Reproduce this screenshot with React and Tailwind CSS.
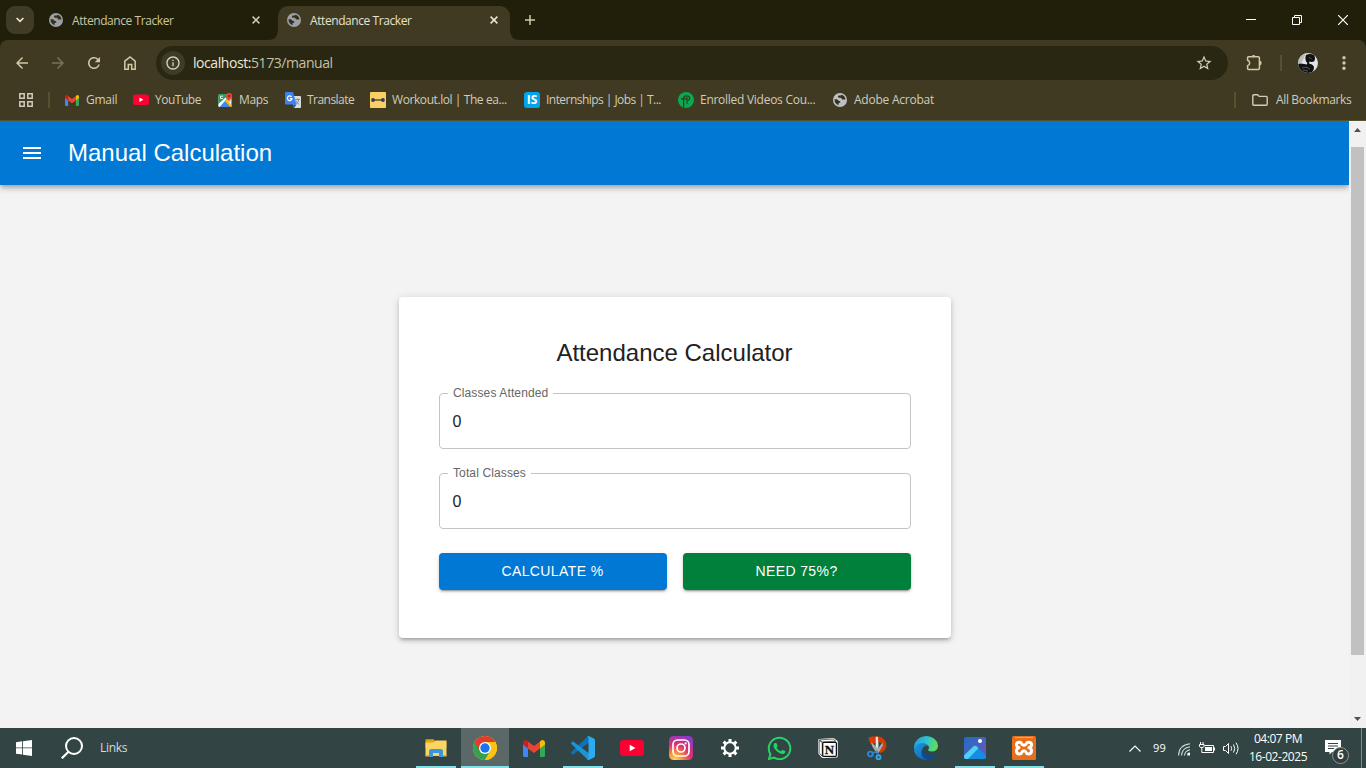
import React from "react";
import {
  MdArrowBack,
  MdArrowForward,
  MdRefresh,
  MdInfoOutline,
  MdStarOutline,
  MdMenu,
} from "react-icons/md";
import { FaWhatsapp } from "react-icons/fa";

function Globe({ color = "#9aa0a6", size = 14 }) {
  return (
    <svg width={size} height={size} viewBox="0 0 14 14" className="shrink-0">
      <circle cx="7" cy="7" r="7" fill={color} />
      <path
        d="M1.500 6.300H3.600Q4.600 6.300 5 7.200Q5.300 7.900 6.300 7.900Q7.400 8 7.400 8.900Q7.300 9.700 6.400 9.800Q5.500 10 5.500 10.900V12.200C3 11.500 1.500 9.400 1.500 6.300Z"
        fill="#35311c"
      />
      <path
        d="M8.700 1.700L7.700 2.500H6Q5 2.600 4.900 3.700Q5 4.700 6.100 4.700H7.700Q8.400 4.800 8.500 5.600Q8.700 6.500 9.700 6.500H12.500C12.400 4.200 10.900 2.200 8.700 1.700Z"
        fill="#35311c"
      />
    </svg>
  );
}

function Cross({ color }) {
  return (
    <svg width="8" height="8" viewBox="0 0 8 8" className="shrink-0">
      <path d="M.6.6l6.8 6.8M7.400.6L.6 7.400" stroke={color} strokeWidth="1.500" />
    </svg>
  );
}

function GmailIcon({ w, h }) {
  return (
    <svg width={w} height={h} viewBox="0 0 22 17">
      <path d="M0 3.500V15.500Q0 17 1.500 17H5V7Z" fill="#4285f4" />
      <path d="M22 3.500V15.500Q22 17 20.500 17H17V7Z" fill="#34a853" />
      <path d="M0 2.500Q0 0 2.300 0Q3.200 0 4 .6L5 1.400V8.400L0 4.600Z" fill="#c5221f" />
      <path d="M22 2.500Q22 0 19.700 0Q18.800 0 18 .6L17 1.400V8.400L22 4.600Z" fill="#fbbc04" />
      <path d="M5 1.400L11 6L17 1.400V8.400L11 13L5 8.400Z" fill="#ea4335" />
    </svg>
  );
}

function YouTubeIcon({ w, h }) {
  return (
    <svg width={w} height={h} viewBox="0 0 24 16">
      <rect width="24" height="16" rx="3.500" fill="#ff0033" />
      <path d="M9.700 4.700V11.300L15.500 8Z" fill="#fff" />
    </svg>
  );
}

function MapsIcon() {
  return (
    <svg width="16" height="16" viewBox="0 0 16 16">
      <rect x="1.500" y="2" width="13" height="13" rx="1.500" fill="#e8eaed" />
      <path d="M1.500 3.500Q1.500 2 3 2H9.500L11 7.500L2 14.500L1.500 14Z" fill="#1ea362" />
      <path d="M2 15L8 8.500L14 15Z" fill="#4285f4" />
      <path d="M1.500 12L8.500 5.500L9.800 7L2.500 15L1.500 14.200Z" fill="#fff" />
      <path d="M8 9L13.500 15H14.500V13.500L9.500 7.500Z" fill="#fbbc04" />
      <path d="M3.500 4.200h2.500M3.500 4.200v2.300h2.300" stroke="#fff" fill="none" strokeWidth=".9" />
      <path d="M12 10.500C12 8 9 6.800 9 4A3.100 3.100 0 0 1 15.200 4C15.200 6.800 12 8 12 10.500Z" fill="#ea4335" />
      <circle cx="12.100" cy="4" r="1.100" fill="#8a1c14" />
    </svg>
  );
}

function TranslateIcon() {
  return (
    <svg width="16" height="16" viewBox="0 0 16 16">
      <path d="M6 4H15Q16 4 16 5V15Q16 16 15 16H9Z" fill="#dadce0" />
      <path d="M1.200 0H8L11.500 12.500H1.200Q0 12.500 0 11.300V1.200Q0 0 1.200 0Z" fill="#3b83f2" />
      <path d="M7.800 12.500H11.500L9.200 16Z" fill="#1a56c4" />
      <path d="M6.500 4.800A2.300 2.300 0 1 0 7 6.600H4.900" stroke="#fff" fill="none" strokeWidth="1.200" />
      <path d="M10.300 7.500H14.800M12.500 6.500V7.500M14 7.500Q13.500 10 11.300 12M11 8.800Q12 11 14.300 12.500" stroke="#7c8187" fill="none" strokeWidth=".9" />
    </svg>
  );
}

function WorkoutIcon() {
  return (
    <svg width="16" height="16" viewBox="0 0 16 16">
      <rect width="16" height="16" rx=".8" fill="#f9cf66" />
      <circle cx="3" cy="8" r="1.900" fill="#2f3b46" />
      <circle cx="13" cy="8" r="1.900" fill="#2f3b46" />
      <path d="M3 8H13" stroke="#2f3b46" strokeWidth="1.300" />
      <path d="M1 8H2.200M13.800 8H15" stroke="#6d7f86" strokeWidth="1" />
    </svg>
  );
}

function ISIcon() {
  return (
    <span className="flex h-4 w-4 items-center justify-center rounded-[3px] bg-[#00a5ec] pb-px font-['Open_Sans',sans-serif] text-[12px] leading-none font-bold text-white">
      IS
    </span>
  );
}

function EnrolledIcon() {
  return (
    <svg width="16" height="16" viewBox="0 0 16 16">
      <circle cx="8" cy="8" r="8" fill="#0aa84f" />
      <path
        d="M5.600 15.500V7.500Q5.600 3.600 8.600 3.900Q11.800 4 11.600 6.600Q11.200 8.600 9 8M3 6.800H9"
        stroke="#2f3a1c"
        fill="none"
        strokeWidth="1.200"
      />
      <path d="M9 5V12" stroke="#2f3a1c" strokeWidth="1" />
    </svg>
  );
}

const bookmarks = [
  { label: "Gmail", width: "w-[69px]", track: "tracking-[-0.25px]", icon: <GmailIcon w={14} h={11} /> },
  { label: "YouTube", width: "w-[84px]", track: "tracking-[-0.48px]", icon: <YouTubeIcon w={16} h={11.500} /> },
  { label: "Maps", width: "w-[68px]", track: "tracking-[-0.35px]", icon: <MapsIcon /> },
  { label: "Translate", width: "w-[85px]", track: "tracking-[-0.53px]", icon: <TranslateIcon /> },
  { label: "Workout.lol | The ea...", width: "w-[154px]", track: "tracking-[-0.42px]", icon: <WorkoutIcon /> },
  { label: "Internships | Jobs | T...", width: "w-[154px]", track: "tracking-[-0.54px]", icon: <ISIcon /> },
  { label: "Enrolled Videos Cou...", width: "w-[154px]", track: "tracking-[-0.27px]", icon: <EnrolledIcon /> },
  { label: "Adobe Acrobat", width: "w-[120px]", track: "tracking-[-0.23px]", icon: <Globe color="#bdc1c6" /> },
];

function TabStrip() {
  return (
    <div className="flex h-10 shrink-0 bg-[#211f0a] text-[12px]">
      <div className="ml-1.5 mt-1.5 flex h-7 w-7 items-center justify-center rounded-[9px] bg-[#403b24]">
        <svg width="8" height="6" viewBox="0 0 8 6">
          <path d="M.6 1L4 4.400L7.400 1" stroke="#e8e4cf" strokeWidth="1.700" fill="none" />
        </svg>
      </div>
      <div className="ml-[15px] flex h-10 w-[211px] items-center">
        <Globe />
        <span className="ml-[9px] flex-1 pt-0.5 tracking-[-0.42px] whitespace-nowrap text-[#c9c5a3]">Attendance Tracker</span>
        <Cross color="#d3cfb0" />
      </div>
      <div className="mt-1.5 flex">
        <svg width="10" height="34" viewBox="0 0 10 34" className="ml-[8px]">
          <path d="M0 34Q10 34 10 24V34Z" fill="#403a23" />
        </svg>
        <div className="flex h-[34px] w-[232px] items-center rounded-t-[10px] bg-[#403a23] pr-[12px] pb-1.5 pl-[9px]">
          <Globe />
          <span className="ml-[9px] flex-1 pt-0.5 tracking-[-0.42px] whitespace-nowrap text-[#e6e2cf]">Attendance Tracker</span>
          <Cross color="#eae6d6" />
        </div>
        <svg width="10" height="34" viewBox="0 0 10 34">
          <path d="M10 34Q0 34 0 24V34Z" fill="#403a23" />
        </svg>
      </div>
      <svg width="10" height="10" viewBox="0 0 10 10" className="mt-[15px] ml-[5px]">
        <path d="M5 0V10M0 5H10" stroke="#cfcaa5" strokeWidth="1.500" />
      </svg>
      <div className="ml-auto flex h-10 items-center pr-[18px]">
        <svg width="10" height="10" viewBox="0 0 10 10" className="mr-9">
          <path d="M0 4.500H10" stroke="#fff" />
        </svg>
        <svg width="10" height="10" viewBox="0 0 10 10" className="mr-9">
          <path d="M.5 2.500H7.500V9.500H.5ZM2.500 2.500V.5H9.500V7.500H7.500" stroke="#fff" fill="none" />
        </svg>
        <svg width="10" height="10" viewBox="0 0 10 10">
          <path d="M0 0L10 10M10 0L0 10" stroke="#fff" strokeWidth="1.200" />
        </svg>
      </div>
    </div>
  );
}

function Toolbar() {
  return (
    <div className="shrink-0 bg-[#211f0a]">
      <div className="flex h-[46px] items-center rounded-t-[8px] bg-[#403a23] text-[#cfcaa5]">
        <MdArrowBack size={18} className="ml-[13px]" />
        <MdArrowForward size={18} className="ml-[18px] text-[#787359]" />
        <MdRefresh size={18} className="ml-[18px]" />
        <svg width="12" height="14" viewBox="0 0 12 14" className="ml-[21px]">
          <path d="M.8 5.200L6 1L11.200 5.200V13.200H7.700V8.600H4.300V13.200H.8Z" stroke="#cfcaa5" strokeWidth="1.500" fill="none" />
        </svg>
        <div className="ml-[20px] flex h-[34px] w-[1072px] items-center rounded-full bg-[#292612]">
          <div className="ml-[5px] flex h-6 w-6 items-center justify-center rounded-full bg-[#403b24]">
            <MdInfoOutline size={16} className="text-[#d8d4c0]" />
          </div>
          <span className="ml-2 flex-1 pb-px text-[14px] leading-[18px] tracking-[-0.43px] text-[#c4c0a8]">
            <span className="text-[#ece9da]">localhost:</span>5173/manual
          </span>
          <MdStarOutline size={18} className="mr-[15px] text-[#d3cfbb]" />
        </div>
        <svg width="18" height="18" viewBox="0 0 18 18" className="ml-[17px]">
          <path
            d="M2.600 6.300V3.600Q2.600 2.700 3.500 2.700H13.200Q14.400 2.700 14.400 3.900V14.200Q14.400 15.400 13.200 15.400H3.500Q2.600 15.400 2.600 14.500V11.600Q4.700 10.900 4.700 9Q4.700 7 2.600 6.300Z"
            stroke="#cfcaa5"
            strokeWidth="1.500"
            fill="none"
          />
          <path d="M6.600 2.700A2 1.800 0 0 1 10.600 2.700ZM14.800 6.800A1.800 2.200 0 0 1 14.800 11.200Z" fill="#cfcaa5" />
        </svg>
        <div className="ml-[17px] h-4 w-0.5 bg-[#56522f]" />
        <svg width="20" height="20" viewBox="0 0 20 20" className="ml-4">
          <defs>
            <clipPath id="avatar">
              <circle cx="10" cy="10" r="10" />
            </clipPath>
          </defs>
          <g clipPath="url(#avatar)">
            <rect width="20" height="20" fill="#e3e3e5" />
            <path d="M0 0H8L4 9L0 12Z" fill="#b9bbbe" />
            <path d="M8 2Q12 0 16 2Q18 5 16.500 8Q14 9.500 11.500 8.500L11 10.500Q15 11 16 14Q16 19 12 20H4Q0 18 0 11Q3 10 6 11L9 11.500Q10 9.500 8 8.500Q6.500 5 8 2Z" fill="#101112" />
            <path d="M11 4.500L13.500 5.500M4 15Q8 13 12 16M5 17L10 18" stroke="#5b5d5f" strokeWidth=".9" fill="none" />
          </g>
        </svg>
        <svg width="4" height="14" viewBox="0 0 4 14" className="ml-[24px]">
          <circle cx="2" cy="1.700" r="1.700" fill="#cfcaa5" />
          <circle cx="2" cy="7" r="1.700" fill="#cfcaa5" />
          <circle cx="2" cy="12.300" r="1.700" fill="#cfcaa5" />
        </svg>
      </div>
    </div>
  );
}

function BookmarkBar() {
  return (
    <div className="flex h-[35px] shrink-0 items-center border-b border-[#56512f] bg-[#403a23] pb-1.5 text-[12px] whitespace-nowrap text-[#cfccbd]">
      <svg width="14" height="14" viewBox="0 0 14 14" className="ml-[19px]">
        <path d="M.8 .8H5.200V5.200H.8ZM8.800 .8H13.200V5.200H8.800ZM.8 8.800H5.200V13.200H.8ZM8.800 8.800H13.200V13.200H8.800Z" stroke="#cfccbd" strokeWidth="1.500" fill="none" />
      </svg>
      <div className="mr-[14px] ml-[15px] h-4 w-0.5 bg-[#56522f]" />
      {bookmarks.map((b) => (
        <div key={b.label} className={`flex shrink-0 items-center gap-1.5 ${b.width}`}>
          <span className="flex h-4 w-4 shrink-0 items-center justify-center">{b.icon}</span>
          <span className={b.track}>{b.label}</span>
        </div>
      ))}
      <div className="ml-auto h-4 w-0.5 bg-[#56522f]" />
      <svg width="16" height="12" viewBox="0 0 16 12" className="ml-4">
        <path d="M.8 1.800Q.8 .7 1.900 .7H5.600L7.200 2.400H14.100Q15.200 2.400 15.200 3.500V10.200Q15.200 11.300 14.100 11.300H1.900Q.8 11.300 .8 10.200Z" stroke="#cfccbd" strokeWidth="1.400" fill="none" />
      </svg>
      <span className="ml-2 w-[90px] tracking-[-0.36px]">All Bookmarks</span>
    </div>
  );
}

function Field({ label }) {
  return (
    <div className="relative flex h-14 items-center rounded-[4px] border border-[#c4c4c4] px-[13px] pt-0.5">
      <span className="absolute -top-[9px] left-2 bg-white pr-[5px] pl-[5.5px] text-[12px] leading-4 tracking-[0.12px] whitespace-nowrap text-[#666]">{label}</span>
      <span className="text-[16px] text-[#212121]">0</span>
    </div>
  );
}

function Page() {
  return (
    <div className="flex h-[607px] shrink-0 bg-[#f3f3f3] font-['Liberation_Sans',Arial,sans-serif]">
      <div className="flex flex-1 flex-col overflow-hidden">
        <header className="flex h-16 shrink-0 items-center bg-[#0078d4] pl-5 text-white shadow-[0_2px_4px_-1px_rgba(0,0,0,0.2),0_4px_5px_0_rgba(0,0,0,0.14),0_1px_10px_0_rgba(0,0,0,0.12)]">
          <MdMenu size={24} />
          <h1 className="ml-6 text-[24px]">Manual Calculation</h1>
        </header>
        <main className="flex flex-1 justify-center pt-28">
          <section className="flex h-[341px] w-[552px] flex-col rounded-[4px] bg-white p-10 shadow-[0_3px_3px_-2px_rgba(0,0,0,0.2),0_3px_4px_0_rgba(0,0,0,0.14),0_1px_8px_0_rgba(0,0,0,0.12)]">
            <h2 className="mb-6 h-8 text-center text-[24px] leading-8 text-[#212121]">Attendance Calculator</h2>
            <div className="flex flex-col gap-6">
              <Field label="Classes Attended" />
              <Field label="Total Classes" />
              <div className="grid grid-cols-2 gap-4 text-[14px] tracking-[0.4px] text-white">
                <button className="h-[37px] rounded-[4px] bg-[#0078d4] shadow-[0_3px_1px_-2px_rgba(0,0,0,0.2),0_2px_2px_0_rgba(0,0,0,0.14),0_1px_5px_0_rgba(0,0,0,0.12)]">CALCULATE %</button>
                <button className="h-[37px] rounded-[4px] bg-[#00803a] shadow-[0_3px_1px_-2px_rgba(0,0,0,0.2),0_2px_2px_0_rgba(0,0,0,0.14),0_1px_5px_0_rgba(0,0,0,0.12)]">NEED 75%?</button>
              </div>
            </div>
          </section>
        </main>
      </div>
      <div className="flex w-[17px] flex-col items-center bg-[#f1f1f1]">
        <svg width="7" height="4" viewBox="0 0 7 4" className="mt-[7px] shrink-0">
          <path d="M0 4L3.500 0L7 4Z" fill="#505050" />
        </svg>
        <div className="mt-[15px] h-[508px] w-[13px] bg-[#c1c1c1]" />
        <svg width="7" height="4" viewBox="0 0 7 4" className="mt-auto mb-[7px] shrink-0">
          <path d="M0 0L3.500 4L7 0Z" fill="#505050" />
        </svg>
      </div>
    </div>
  );
}

function ExplorerIcon() {
  return (
    <svg width="22" height="18" viewBox="0 0 22 18">
      <path d="M.5 1Q.5 .3 1.200 .3H8.500L10 2H20.500Q21.300 2 21.300 2.800V9H.5Z" fill="#e5a50a" />
      <path d="M.5 3.500H8.500L10.500 1.500H21.500V17H.5Z" fill="#fcd462" />
      <path d="M4 18V12Q4 10 6 10H16Q18 10 18 12V18H14V14H8V18Z" fill="#3a96dd" />
      <path d="M.5 16H4V17.500H.5ZM18 16H21.500V17.500H18Z" fill="#e0b040" />
    </svg>
  );
}

function ChromeIcon() {
  return (
    <svg width="24" height="24" viewBox="0 0 24 24">
      <circle cx="12" cy="12" r="12" fill="#fbc116" />
      <path d="M12 12L1.610 6A12 12 0 0 0 12 24L17.200 15Z" fill="#31a350" />
      <path d="M1.610 6A12 12 0 0 1 22.390 6H12L6.800 15Z" fill="#e33b2e" />
      <path d="M12 6H22.390A12 12 0 0 1 12 24L17.200 15Z" fill="#fbc116" />
      <circle cx="12" cy="12" r="6" fill="#fff" />
      <circle cx="12" cy="12" r="4.700" fill="#1a73e8" />
    </svg>
  );
}

function VSCodeIcon() {
  return (
    <svg width="24" height="24" viewBox="0 0 24 24">
      <path d="M17.500 0L22.800 2.500Q24 3.100 24 4.400V8L17.500 7L2.500 18.300Q1.800 18.800 1.200 18.200L.3 17.300Q-.3 16.600 .4 16L16 1Q16.700 .2 17.500 0Z" fill="#0d72b8" />
      <path d="M17.500 24L22.800 21.500Q24 20.900 24 19.600V16L17.500 17L2.500 5.700Q1.800 5.200 1.200 5.800L.3 6.700Q-.3 7.400 .4 8L16 23Q16.700 23.800 17.500 24Z" fill="#1c94db" />
      <path d="M17.500 0L22.800 2.500Q24 3.100 24 4.400V19.600Q24 20.900 22.800 21.500L17.500 24Q16.600 23.900 16 23Q17.500 24 17.500 22V2Q17.500 0 16 1Q16.600 .1 17.500 0Z" fill="#2eaaf0" />
    </svg>
  );
}

function InstagramIcon() {
  return (
    <svg width="24" height="24" viewBox="0 0 24 24">
      <defs>
        <radialGradient id="insta" cx=".25" cy="1" r="1.100">
          <stop offset="0" stopColor="#fed75b" />
          <stop offset=".3" stopColor="#fa8a3a" />
          <stop offset=".6" stopColor="#dd3072" />
          <stop offset="1" stopColor="#8a3ac8" />
        </radialGradient>
      </defs>
      <rect width="24" height="24" rx="4.500" fill="url(#insta)" />
      <rect x="4" y="4" width="16" height="16" rx="4.500" stroke="#fff" strokeWidth="1.700" fill="none" />
      <circle cx="12" cy="12" r="4" stroke="#fff" strokeWidth="1.700" fill="none" />
      <circle cx="16.600" cy="7.400" r="1.100" fill="#fff" />
    </svg>
  );
}

function GearIcon() {
  return (
    <svg width="18" height="18" viewBox="0 0 18 18">
      <path
        d="M9 0V3.500M9 14.500V18M0 9H3.500M14.500 9H18M2.640 2.640L5.100 5.100M12.900 12.900L15.360 15.360M15.360 2.640L12.900 5.100M5.100 12.900L2.640 15.360"
        stroke="#fff"
        strokeWidth="3"
      />
      <circle cx="9" cy="9" r="5.700" stroke="#fff" strokeWidth="2" fill="none" />
    </svg>
  );
}

function NotionIcon() {
  return (
    <svg width="20" height="20" viewBox="0 0 20 20">
      <path d="M.2 2Q.2 1 1.200 .9L14.500 .1Q15.500 0 16.300 .6L19 2.600Q19.800 3.100 19.800 4V18Q19.800 19.500 18.200 19.600L5 20Q4 20 3.400 19.300L.7 16Q.2 15.400 .2 14.600Z" fill="#fff" />
      <path d="M1.400 1.900L14.800 1.100L17.800 3.200L4.600 4Z" fill="#fff" stroke="#111" strokeWidth=".6" />
      <path d="M1.200 2.300L4.200 4.700V18.300L1.200 14.800Z" fill="#fff" stroke="#111" strokeWidth=".6" />
      <rect x="4.700" y="4.300" width="13.700" height="14" rx="1" fill="#fff" stroke="#111" strokeWidth="1.300" />
      <text x="11.500" y="15.800" textAnchor="middle" fontFamily="Liberation Serif" fontWeight="700" fontSize="13" fill="#111" stroke="#111" strokeWidth=".3">N</text>
    </svg>
  );
}

function SnipIcon() {
  return (
    <svg width="20" height="24" viewBox="0 0 20 24">
      <path d="M1.500 1.500Q8-.8 14 1Q19.500 4 19.500 10Q18.500 15.500 13 17L12 13.500Q16 12.500 15.500 9Q14.500 5.500 10 6Q7 6.500 5.500 9.500Q2 7 1.500 1.500Z" fill="#d83b01" />
      <path d="M8.800 .8H10.800Q12 8 11.200 15L9.500 17.500L8.500 14Z" fill="#e4e6e8" />
      <path d="M4 6Q5 12 9.500 16L11.500 17L16 9.500L15.500 6.500L11 12.500Z" fill="#a9adb0" />
      <circle cx="3.300" cy="18" r="2.400" stroke="#2b88d8" strokeWidth="1.900" fill="none" />
      <circle cx="11.500" cy="21.300" r="2" stroke="#35a5ea" strokeWidth="1.900" fill="none" />
      <path d="M5.500 17L10 15.500L11.500 19" stroke="#2b88d8" strokeWidth="1.500" fill="none" />
    </svg>
  );
}

function EdgeIcon() {
  return (
    <svg width="24" height="24" viewBox="0 0 24 24">
      <defs>
        <linearGradient id="edgeTop" x1="0" y1=".3" x2="1" y2=".5">
          <stop offset="0" stopColor="#229fe3" />
          <stop offset=".5" stopColor="#2fc3d0" />
          <stop offset="1" stopColor="#64dd55" />
        </linearGradient>
        <linearGradient id="edgeLow" x1="0" y1="0" x2="1" y2="1">
          <stop offset="0" stopColor="#1b9de2" />
          <stop offset="1" stopColor="#0d5cab" />
        </linearGradient>
      </defs>
      <path d="M0 11Q1 1 12 0Q22.500 .5 24 9.500Q24 15.500 17.500 15.500Q13.500 15.300 14.300 13.500Q16 11.500 13.800 9.300Q11 7 6 8.500Q2 9.500 0 13Z" fill="url(#edgeTop)" />
      <path d="M0 13Q2 7 8.500 7Q13 7.300 14.500 10Q9.500 9 8.300 14Q8 20 15 23.600Q9 25 4 21Q0 17.500 0 13Z" fill="url(#edgeLow)" />
      <path d="M8.500 12.500Q8 17 13 18.800Q18 20.300 22.800 17Q19.500 23 14 24Q8 22.500 7.500 17Q7.500 14.500 8.500 12.500Z" fill="#0b4a96" />
    </svg>
  );
}

function PhotosIcon() {
  return (
    <svg width="22" height="22" viewBox="0 0 22 22">
      <defs>
        <linearGradient id="sky" x1="0" y1="0" x2="1" y2="1">
          <stop offset="0" stopColor="#1d6fc5" />
          <stop offset="1" stopColor="#7355b5" />
        </linearGradient>
      </defs>
      <rect width="22" height="22" rx="2" fill="url(#sky)" />
      <path d="M0 18.500L9.300 9.500Q11 8 12.700 9.500L22 18.500V20Q22 22 20 22H2Q0 22 0 20Z" fill="#168de0" />
      <path d="M0 18.500L9.300 9.500Q11 8 12.700 9.500L14.500 11.300L4 22H2Q0 22 0 20Z" fill="#4fd0f5" />
      <circle cx="16" cy="4" r="2" fill="#fff" />
    </svg>
  );
}

function XamppIcon() {
  return (
    <svg width="24" height="24" viewBox="0 0 24 24">
      <rect width="24" height="24" rx="1.500" fill="#e66f1c" />
      <path d="M3 1.500H21" stroke="#f4a468" strokeWidth="1.200" />
      <path
        d="M7.500 6.300Q4.300 6.300 4.500 9Q4.800 11.300 7 11.500Q4.500 12.500 4.500 15Q4.600 18 7.500 18Q9.300 18 9.800 16.500Q10.500 14.800 12 14.800Q13.500 14.800 14.200 16.500Q14.700 18 16.500 18Q19.400 18 19.500 15Q19.500 12.500 17 11.500Q19.200 11.300 19.500 9Q19.700 6.300 16.500 6.300Q14.900 6.300 14.400 7.700Q13.700 9.200 12 9.200Q10.300 9.200 9.600 7.700Q9.100 6.300 7.500 6.300Z"
        fill="none"
        stroke="#fff"
        strokeWidth="3"
        strokeLinejoin="round"
      />
    </svg>
  );
}

const apps = [
  { id: "explorer", open: true, icon: <ExplorerIcon /> },
  { id: "chrome", active: true, icon: <ChromeIcon /> },
  { id: "gmail", icon: <GmailIcon w={22} h={17} /> },
  { id: "vscode", open: true, icon: <VSCodeIcon /> },
  { id: "youtube", icon: <YouTubeIcon w={24} h={16} /> },
  { id: "instagram", icon: <InstagramIcon /> },
  { id: "settings", icon: <GearIcon /> },
  { id: "whatsapp", icon: <FaWhatsapp size={27} color="#25d366" /> },
  { id: "notion", icon: <NotionIcon /> },
  { id: "snip", icon: <SnipIcon /> },
  { id: "edge", icon: <EdgeIcon /> },
  { id: "photos", open: true, icon: <PhotosIcon /> },
  { id: "xampp", open: true, icon: <XamppIcon /> },
];

function Taskbar() {
  return (
    <div className="flex h-10 shrink-0 items-center bg-[#324443] text-[12px] whitespace-nowrap text-white">
      <svg width="16" height="16" viewBox="0 0 16 16" className="ml-4">
        <path d="M0 2.200L6.200 1.300V7.500H0ZM7 1.200L16 0V7.500H7ZM0 8.300H6.200V14.600L0 13.800ZM7 8.300H16V16L7 14.800Z" fill="#fff" />
      </svg>
      <svg width="22" height="22" viewBox="0 0 22 22" className="ml-[29px]">
        <circle cx="13" cy="9" r="8" stroke="#fff" strokeWidth="2" fill="none" />
        <path d="M7.500 14.800L.8 21.300" stroke="#fff" strokeWidth="2.200" />
      </svg>
      <span className="ml-[17px] w-[312px] tracking-[-0.3px] text-[#d9dedd]">Links</span>
      <div className="flex gap-px">
        {apps.map((a) => (
          <div key={a.id} className={`flex h-10 w-12 flex-col items-center ${a.active ? "bg-[#5a6968]" : ""}`}>
            <div className="flex h-[38px] items-center justify-center pt-0.5">{a.icon}</div>
            {a.open && <div className="h-0.5 w-10 bg-[#84e0e8]" />}
            {a.active && <div className="h-0.5 w-12 bg-[#84e0e8]" />}
          </div>
        ))}
      </div>
      <svg width="12" height="7" viewBox="0 0 12 7" className="ml-[81px]">
        <path d="M.5 6.500L6 1L11.500 6.500" stroke="#fff" strokeWidth="1.200" fill="none" />
      </svg>
      <span className="ml-[12px] w-[25px] text-[11px] tracking-[0.3px]">99</span>
      <svg width="13" height="13" viewBox="0 0 13 13" className="mt-0.5">
        <path d="M.6 12.500Q1 2 12 .8M3.500 12.500Q4 5 12 3.800M6.400 12.500Q7 8 12 6.800" stroke="#d8dddc" strokeWidth="1.100" fill="none" />
        <path d="M9.300 12.500V10.500Q10 9.500 12 9.500V12.500Z" fill="#fff" />
      </svg>
      <svg width="16" height="12" viewBox="0 0 16 12" className="ml-2">
        <path d="M5.500 3.500H14.500V10.500H4.500" stroke="#fff" fill="none" />
        <path d="M6 5H13V9H6ZM15 5.500H16V8.500H15Z" fill="#fff" />
        <path d="M1.500 0V2M4 0V2M.5 2.500H5V4.500Q5 5.500 2.800 5.500Q.5 5.500 .5 4.500ZM2.800 5.500V10.500H5" stroke="#fff" fill="none" />
      </svg>
      <svg width="17" height="13" viewBox="0 0 17 13" className="ml-2">
        <path d="M.5 4.500H2.500L5.500 1.500V11.500L2.500 8.500H.5Z" stroke="#fff" fill="none" />
        <path d="M8 4.300Q9.300 6.500 8 8.700M10.500 2.500Q13 6.500 10.500 10.500M13 .7Q17 6.500 13 12.300" stroke="#fff" fill="none" />
      </svg>
      <div className="ml-[8px] flex w-[60px] flex-col items-center leading-[18px] tracking-[-0.45px]">
        <span>04:07 PM</span>
        <span>16-02-2025</span>
      </div>
      <div className="relative ml-[17px] mb-[5px] h-[23px] w-[25px] self-end">
        <svg width="16" height="15" viewBox="0 0 16 15" className="absolute top-0 left-0">
          <path d="M0 0H16V12H7L4.500 14.500V12H0Z" fill="#fff" />
          <path d="M3 3.500H13M3 6H13M3 8.500H9" stroke="#324443" strokeWidth="1" />
        </svg>
        <span className="absolute top-[7px] left-[7px] flex h-[17px] w-[17px] items-center justify-center rounded-full border border-[#8d9796] bg-[#333d3c] pb-px text-[12px] leading-none font-semibold">6</span>
      </div>
      <div className="mr-[4px] ml-auto h-10 w-px bg-[#7e8988]" />
    </div>
  );
}

export default function App() {
  return (
    <div className="flex h-[768px] w-[1366px] flex-col overflow-hidden bg-[#f3f3f3] font-['Open_Sans','Noto_Sans',sans-serif]">
      <TabStrip />
      <Toolbar />
      <BookmarkBar />
      <Page />
      <Taskbar />
    </div>
  );
}
